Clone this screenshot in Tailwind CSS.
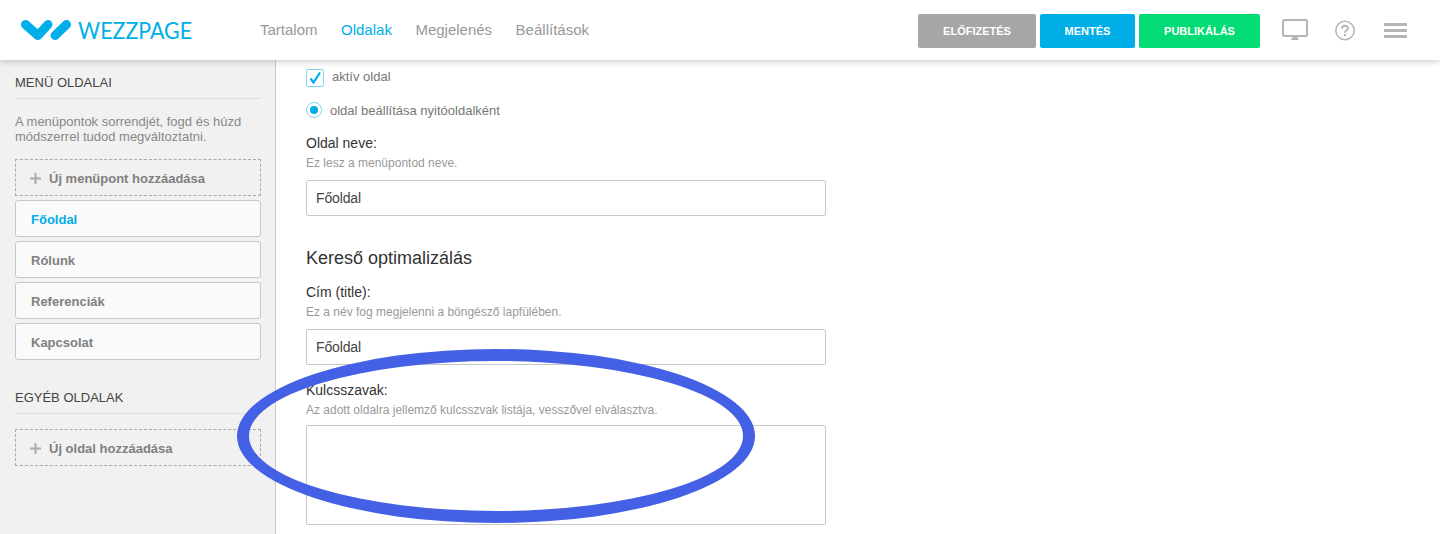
<!DOCTYPE html>
<html lang="hu">

<head>
    <meta charset="UTF-8">
    <meta name="viewport" content="width=device-width, initial-scale=1.0">
    <title>Wezzpage</title>
    <script src="https://cdn.jsdelivr.net/npm/@tailwindcss/browser@4"></script>
</head>

<body class="bg-white font-['Liberation_Sans',Arial,sans-serif] overflow-hidden">
    <div class="relative h-[534px] w-[1440px] overflow-hidden">

        <!-- Header -->
        <header class="relative z-10 flex h-[60px] items-center bg-white shadow-[0_2px_6px_rgba(0,0,0,0.18)]">
            <a class="ml-[21px] flex w-[239px] items-center gap-[7px]">
                <svg width="50" height="20" viewBox="0 0 50 20" fill="none" stroke="#00aee8" stroke-width="9" stroke-linecap="round" stroke-linejoin="round">
                    <path d="M4.500 4.500 L17 15.500 L27 4.500" />
                    <path d="M34 15.500 L45.500 4.500" />
                </svg>
                <span class="inline-block origin-left scale-x-[0.93] font-['Lato',sans-serif] text-[23px] leading-none text-[#00aee8]">WEZZPAGE</span>
            </a>
            <nav class="flex gap-[23.5px] text-[15px] text-[#999]">
                <a>Tartalom</a>
                <a class="text-[#00aee8]">Oldalak</a>
                <a>Megjelenés</a>
                <a>Beállítások</a>
            </nav>
            <div class="ml-auto mt-[2px] flex gap-1 text-[11px] font-bold text-white">
                <button class="h-[34px] w-[118px] rounded-[2px] bg-[#a6a6a6]">ELŐFIZETÉS</button>
                <button class="h-[34px] w-[95px] rounded-[2px] bg-[#00aee8]">MENTÉS</button>
                <button class="h-[34px] w-[121px] rounded-[2px] bg-[#03dc74]">PUBLIKÁLÁS</button>
            </div>
            <div class="ml-[22px] mr-[33px] flex items-center">
                <svg width="26" height="23" viewBox="0 0 26 23" fill="none">
                    <rect x="1" y="1" width="24" height="16" rx="1.500" stroke="#b5b5b5" stroke-width="2" />
                    <path d="M10.500 18 H15.500 L17 21 H9 Z" fill="#b5b5b5" />
                </svg>
                <svg class="ml-[27px]" width="20" height="21" viewBox="0 0 20 21" fill="none">
                    <circle cx="10" cy="10.500" r="9.200" stroke="#b5b5b5" stroke-width="1.500" />
                    <path d="M7 8.500 C7 5 13 5 13 8.300 C13 10.300 10 10.300 10 12.700" stroke="#b5b5b5" stroke-width="2" />
                    <rect x="9" y="14" width="2" height="2" fill="#b5b5b5" />
                </svg>
                <div class="ml-[29px] flex w-[23px] flex-col gap-[3px]">
                    <div class="h-[3px] bg-[#b5b5b5]"></div>
                    <div class="h-[3px] bg-[#b5b5b5]"></div>
                    <div class="h-[3px] bg-[#b5b5b5]"></div>
                </div>
            </div>
        </header>

        <div class="flex h-[474px]">
            <!-- Sidebar -->
            <aside class="w-[276px] shrink-0 border-r border-[#c8c8c8] bg-[#f1f1f1] pl-[15px] pr-[14px]">
                <h3 class="mt-[15px] border-b border-[#dcdcdc] pb-[7px] text-[13px] leading-[16px] text-[#444]">MENÜ OLDALAI</h3>
                <p class="mt-[15px] text-[13px] leading-[15px] text-[#888]">A menüpontok sorrendjét, fogd és húzd módszerrel tudod megváltoztatni.</p>
                <div class="mt-[15px] flex flex-col gap-1 text-[13px] font-bold text-[#808080]">
                    <div class="flex h-[37px] items-center border border-dashed border-[#aaa] pl-[14px] pt-[2px]">
                        <svg class="mr-[8px]" width="11" height="11" viewBox="0 0 11 11" fill="#aaa"><path d="M4.500 0 H6.500 V4.500 H11 V6.500 H6.500 V11 H4.500 V6.500 H0 V4.500 H4.500 Z" /></svg>Új menüpont hozzáadása
                    </div>
                    <div class="flex h-[37px] items-center rounded-[3px] border border-[#c8c8c8] bg-[#fafafa] pl-[15px] pt-[2px] text-[#00aee8]">Főoldal</div>
                    <div class="flex h-[37px] items-center rounded-[3px] border border-[#c8c8c8] bg-[#fafafa] pl-[15px] pt-[2px]">Rólunk</div>
                    <div class="flex h-[37px] items-center rounded-[3px] border border-[#c8c8c8] bg-[#fafafa] pl-[15px] pt-[2px]">Referenciák</div>
                    <div class="flex h-[37px] items-center rounded-[3px] border border-[#c8c8c8] bg-[#fafafa] pl-[15px] pt-[2px]">Kapcsolat</div>
                </div>
                <h3 class="mt-[30px] border-b border-[#dcdcdc] pb-[7px] text-[13px] leading-[16px] text-[#444]">EGYÉB OLDALAK</h3>
                <div class="mt-[15px] flex h-[37px] items-center border border-dashed border-[#aaa] pl-[14px] pt-[2px] text-[13px] font-bold text-[#808080]">
                    <svg class="mr-[8px]" width="11" height="11" viewBox="0 0 11 11" fill="#aaa"><path d="M4.500 0 H6.500 V4.500 H11 V6.500 H6.500 V11 H4.500 V6.500 H0 V4.500 H4.500 Z" /></svg>Új oldal hozzáadása
                </div>
            </aside>

            <!-- Form -->
            <main class="w-[550px] pl-[30px]">
                <label class="mt-[9px] flex h-[18px] items-start">
                    <span class="flex h-[18px] w-[18px] items-center justify-center rounded-[2px] border border-[#7fd6f3]">
                        <svg width="16" height="16" viewBox="0 0 16 16" fill="none" stroke="#00aee8" stroke-width="2.200">
                            <path d="M3.500 8.500 L6.500 12.500 L13 2.500" />
                        </svg>
                    </span>
                    <span class="ml-[8px] text-[13px] leading-[15px] text-[#777]">aktív oldal</span>
                </label>
                <label class="mt-[15px] flex h-[16px] items-center">
                    <span class="flex h-[16px] w-[16px] items-center justify-center rounded-full border border-[#7fd6f3]">
                        <span class="h-[8px] w-[8px] rounded-full bg-[#00aee8]"></span>
                    </span>
                    <span class="ml-[8px] pt-[2px] text-[13px] text-[#777]">oldal beállítása nyitóoldalként</span>
                </label>

                <div class="mt-[17px] text-[14px] leading-[16px] text-[#333]">Oldal neve:</div>
                <div class="mt-[5px] text-[12px] leading-[14px] text-[#999]">Ez lesz a menüpontod neve.</div>
                <input value="Főoldal" class="mt-[10px] block h-[36px] w-[520px] rounded-[2px] border border-[#c8c8c8] px-[9px] text-[14px] tracking-[-0.15px] text-[#444]" />

                <h2 class="mt-[31px] text-[18px] leading-[22px] text-[#333]">Kereső optimalizálás</h2>

                <div class="mt-[15px] text-[14px] leading-[16px] text-[#333]">Cím (title):</div>
                <div class="mt-[5px] text-[12px] leading-[14px] text-[#999]">Ez a név fog megjelenni a böngésző lapfülében.</div>
                <input value="Főoldal" class="mt-[10px] block h-[36px] w-[520px] rounded-[2px] border border-[#c8c8c8] px-[9px] text-[14px] tracking-[-0.15px] text-[#444]" />

                <div class="mt-[17px] text-[14px] leading-[16px] text-[#333]">Kulcsszavak:</div>
                <div class="mt-[5px] text-[12px] leading-[14px] text-[#999]">Az adott oldalra jellemző kulcsszvak listája, vesszővel elválasztva.</div>
                <textarea class="mt-[8px] block h-[100px] w-[520px] resize-none rounded-[2px] border border-[#c8c8c8]"></textarea>
            </main>
        </div>

        <!-- Hand-drawn highlight over the form -->
        <div class="absolute left-[237px] top-[349px] z-20 h-[174px] w-[518px] rounded-[50%] border-[12px] border-[#4460e4]"></div>
    </div>
</body>

</html>
